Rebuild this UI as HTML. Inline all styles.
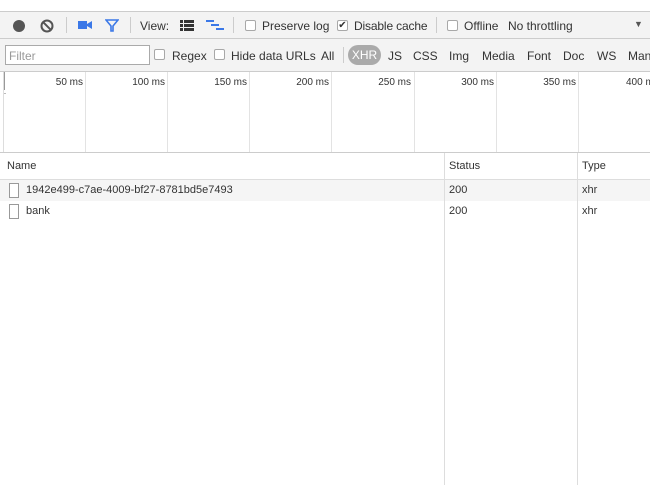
<!DOCTYPE html>
<html><head><style>
*{margin:0;padding:0;box-sizing:border-box}
body{width:650px;height:485px;overflow:hidden;background:#fff;font-family:"Liberation Sans",sans-serif;font-size:12px;color:#333;position:relative}
.abs{position:absolute}
.tb{top:11px;left:0;width:650px;height:28px;background:#f3f3f3;border-top:1px solid #ccc;border-bottom:1px solid #ccc}
.fb{top:39px;left:0;width:650px;height:33px;background:#f3f3f3;border-bottom:1px solid #ccc}
.t{position:absolute;white-space:nowrap}
.cb{position:absolute;width:11px;height:11px;border:1px solid #a8a8a8;border-radius:2px;background:#fff}
.sep{position:absolute;width:1px;height:16px;background:#ccc}
.gl{position:absolute;top:72px;height:80px;width:1px;background:#e3e3e3}
.ms{position:absolute;top:77px;font-size:10px;color:#333;text-align:right;width:60px}
.cl{position:absolute;top:153px;bottom:0;width:1px;background:#ddd}
.icon{position:absolute;width:10px;height:15px;border:1px solid #999;background:#fff}
</style></head><body>
<div class="abs tb">
 <div class="abs" style="left:13px;top:8px;width:12px;height:12px;border-radius:50%;background:#555"></div>
 <svg class="abs" style="left:40px;top:7px" width="14" height="14"><circle cx="7" cy="7" r="5.5" fill="none" stroke="#555" stroke-width="2"/><line x1="3.2" y1="3.2" x2="10.8" y2="10.8" stroke="#555" stroke-width="2"/></svg>
 <div class="sep" style="left:66px;top:5px"></div>
 <svg class="abs" style="left:78px;top:8px" width="14" height="11"><rect x="0" y="1" width="9" height="8" fill="#3b78e7"/><polygon points="9,4 14,1 14,9 9,6" fill="#3b78e7"/></svg>
 <svg class="abs" style="left:105px;top:6px" width="14" height="14"><polygon points="1,2 13,2 8,8 8,13 6,13 6,8" fill="none" stroke="#3b78e7" stroke-width="1.6"/></svg>
 <div class="sep" style="left:130px;top:5px"></div>
 <div class="t" style="left:140px;top:7px">View:</div>
 <svg class="abs" style="left:180px;top:8px" width="14" height="11"><g fill="#333"><rect x="0" y="0" width="3" height="3"/><rect x="4" y="0" width="10" height="3"/><rect x="0" y="4" width="3" height="3"/><rect x="4" y="4" width="10" height="3"/><rect x="0" y="8" width="3" height="3"/><rect x="4" y="8" width="10" height="3"/></g></svg>
 <svg class="abs" style="left:206px;top:8px" width="18" height="12"><g fill="#3b78e7"><rect x="0" y="0" width="8" height="2"/><rect x="5" y="4" width="8" height="2"/><rect x="10" y="8" width="8" height="2"/></g></svg>
 <div class="sep" style="left:233px;top:5px"></div>
 <div class="cb" style="left:245px;top:8px"></div>
 <div class="t" style="left:262px;top:7px">Preserve log</div>
 <div class="cb" style="left:337px;top:8px;font-size:10px;line-height:9px;text-align:center">✔</div>
 <div class="t" style="left:354px;top:7px;letter-spacing:-0.15px">Disable cache</div>
 <div class="sep" style="left:436px;top:5px"></div>
 <div class="cb" style="left:447px;top:8px"></div>
 <div class="t" style="left:464px;top:7px">Offline</div>
 <div class="t" style="left:508px;top:7px">No throttling</div>
 <div class="t" style="left:634px;top:7px;font-size:9px;color:#555">▼</div>
</div>
<div class="abs fb">
 <div class="abs" style="left:5px;top:6px;width:145px;height:20px;border:1px solid #aaa;background:#fff"><span style="position:absolute;left:3px;top:3px;color:#999">Filter</span></div>
 <div class="cb" style="left:154px;top:10px"></div>
 <div class="t" style="left:172px;top:10px">Regex</div>
 <div class="cb" style="left:214px;top:10px"></div>
 <div class="t" style="left:231px;top:10px">Hide data URLs</div>
 <div class="t" style="left:321px;top:10px">All</div>
 <div class="sep" style="left:343px;top:8px"></div>
 <div class="abs" style="left:348px;top:6px;width:33px;height:20px;border-radius:10px;background:#aaa;color:#fff;text-align:center;line-height:20px">XHR</div>
 <div class="t" style="left:388px;top:10px">JS</div>
 <div class="t" style="left:413px;top:10px">CSS</div>
 <div class="t" style="left:449px;top:10px">Img</div>
 <div class="t" style="left:482px;top:10px">Media</div>
 <div class="t" style="left:527px;top:10px">Font</div>
 <div class="t" style="left:563px;top:10px">Doc</div>
 <div class="t" style="left:597px;top:10px">WS</div>
 <div class="t" style="left:628px;top:10px">Manifest</div>
</div>
<div class="abs" style="left:3px;top:72px;width:2px;height:18px;background:#999"></div>
<div class="abs" style="left:3px;top:93px;width:3px;height:1px;background:#bbb"></div>
<div class="abs" style="left:3px;top:72px;width:1px;height:80px;background:#ddd"></div>
<div class="gl" style="left:85px"></div><div class="gl" style="left:167px"></div><div class="gl" style="left:249px"></div><div class="gl" style="left:331px"></div><div class="gl" style="left:414px"></div><div class="gl" style="left:496px"></div><div class="gl" style="left:578px"></div>
<div class="ms" style="left:23px">50 ms</div><div class="ms" style="left:105px">100 ms</div><div class="ms" style="left:187px">150 ms</div><div class="ms" style="left:269px">200 ms</div><div class="ms" style="left:351px">250 ms</div><div class="ms" style="left:434px">300 ms</div><div class="ms" style="left:516px">350 ms</div><div class="t" style="left:626px;top:77px;font-size:10px">400 ms</div>
<div class="abs" style="left:0;top:152px;width:650px;height:28px;border-top:1px solid #ccc;border-bottom:1px solid #ddd;background:#fff"></div>
<div class="abs" style="left:0;top:180px;width:650px;height:21px;background:#f5f5f5"></div>
<div class="cl" style="left:444px"></div><div class="cl" style="left:577px"></div>
<div class="t" style="left:7px;top:160px;font-size:11px">Name</div>
<div class="t" style="left:449px;top:160px;font-size:11px">Status</div>
<div class="t" style="left:582px;top:160px;font-size:11px">Type</div>
<div class="icon" style="left:9px;top:183px"></div>
<div class="t" style="left:26px;top:184px;font-size:11px">1942e499-c7ae-4009-bf27-8781bd5e7493</div>
<div class="t" style="left:449px;top:184px;font-size:11px">200</div>
<div class="t" style="left:582px;top:184px;font-size:11px">xhr</div>
<div class="icon" style="left:9px;top:204px"></div>
<div class="t" style="left:26px;top:205px;font-size:11px">bank</div>
<div class="t" style="left:449px;top:205px;font-size:11px">200</div>
<div class="t" style="left:582px;top:205px;font-size:11px">xhr</div>
</body></html>
